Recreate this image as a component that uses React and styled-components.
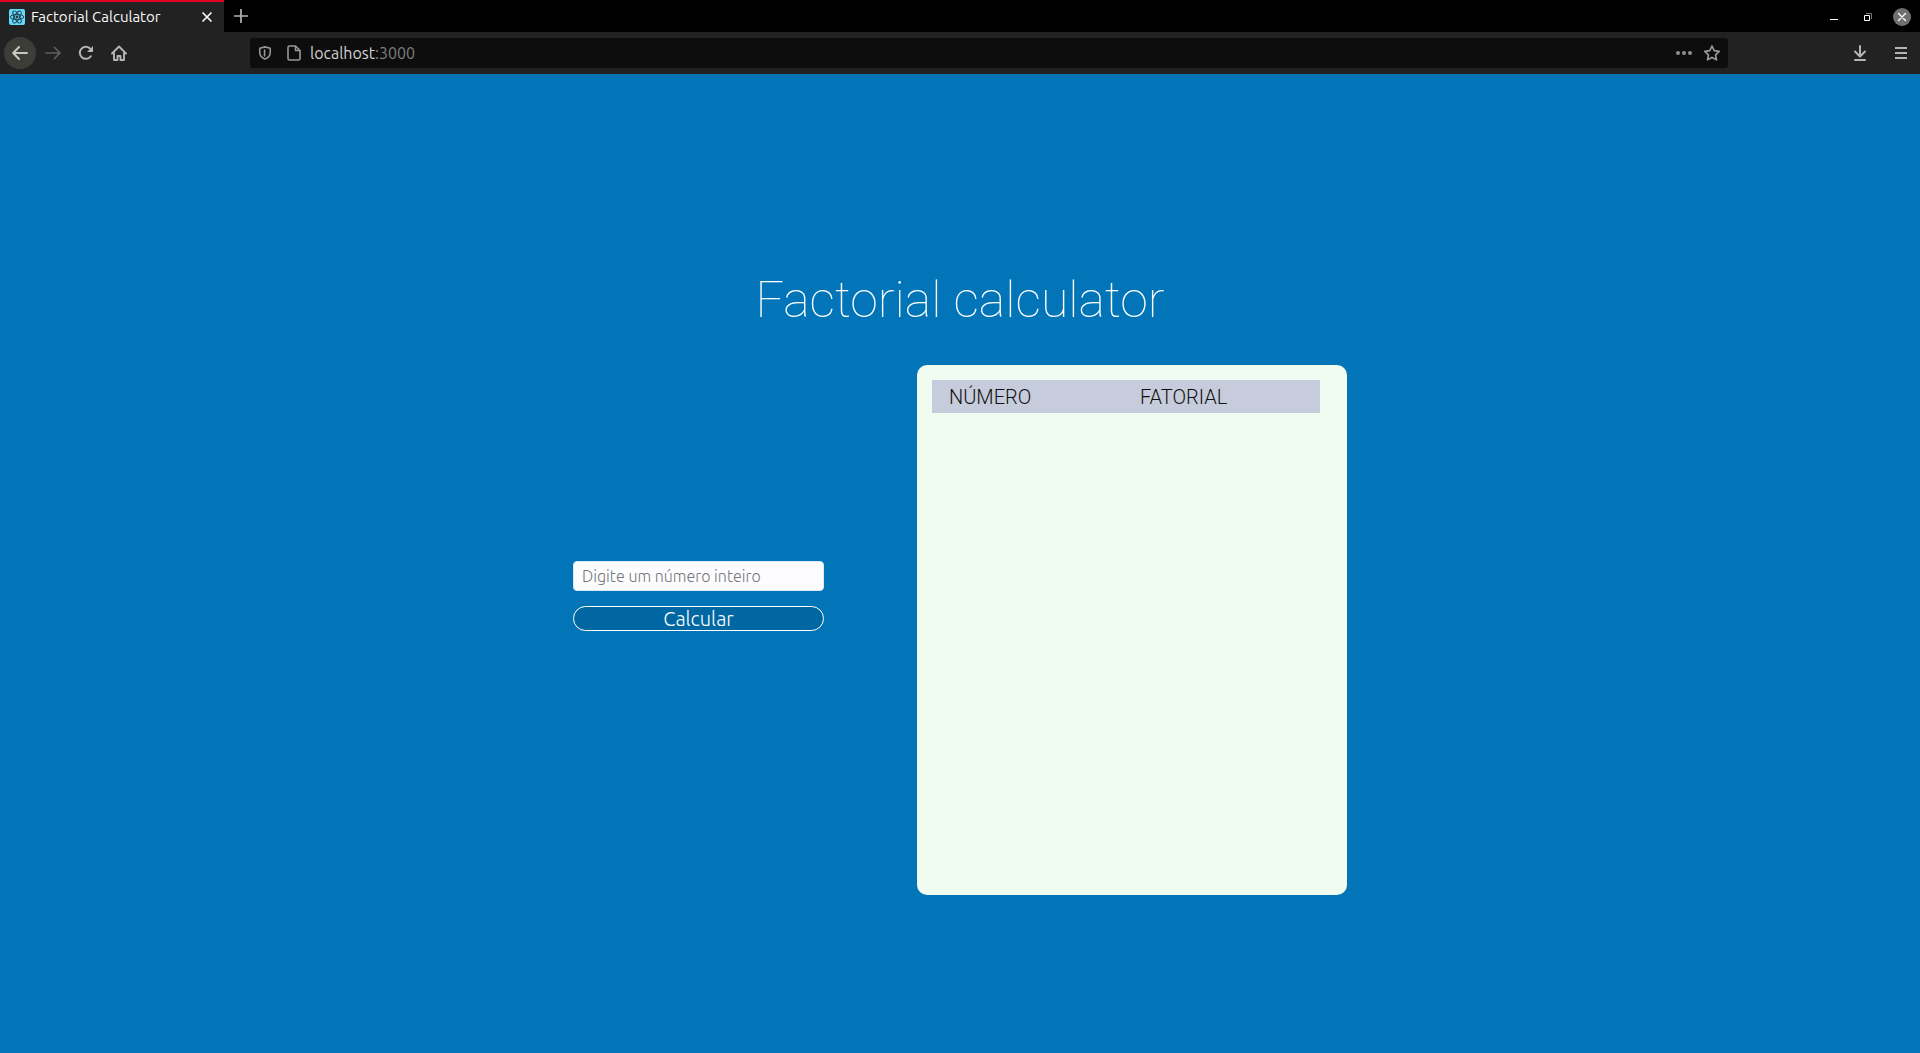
import React, { useState } from 'react';
import styled, { createGlobalStyle } from 'styled-components';

const UI_FONT = 'Ubuntu, "Open Sans", "Noto Sans", sans-serif';
const PAGE_FONT = 'Roboto, "Liberation Sans", sans-serif';

const GlobalStyle = createGlobalStyle`
  *, *::before, *::after { box-sizing: border-box; }
  body { margin: 0; background: #0175b8; }
`;

const Window = styled.div`
  min-height: 100vh;
  display: flex;
  flex-direction: column;
  font-family: ${UI_FONT};
`;

const TabBar = styled.header`
  display: flex;
  gap: 1px;
  height: 32px;
  background: #000;
`;

const Tab = styled.div`
  display: flex;
  align-items: center;
  gap: 6px;
  width: 224px;
  padding: 0 8px 0 9px;
  border-top: 2px solid #e00024;
  background: #222222;
  color: #f9f9fa;
`;

const TabTitle = styled.span`
  flex: 1;
  font-size: 15px;
  line-height: 18px;
  white-space: nowrap;
`;

const IconButton = styled.button`
  display: flex;
  align-items: center;
  justify-content: center;
  flex: none;
  width: ${(p) => p.$size || 32}px;
  height: ${(p) => p.$size || 32}px;
  padding: 0;
  border: 0;
  border-radius: 50%;
  background: ${(p) => p.$fill || 'transparent'};
  color: ${(p) => p.$color || '#b4b4b4'};
`;

const WindowControls = styled.div`
  display: flex;
  align-items: center;
  gap: 16px;
  margin-left: auto;
  padding: 2px 9px 0 0;
`;

const Toolbar = styled.nav`
  display: grid;
  grid-template-columns: 250px 1fr 192px;
  align-items: center;
  height: 42px;
  background: #222222;
`;

const ToolGroup = styled.div`
  display: flex;
  align-items: center;
  gap: 1px;
  padding: 0 4px;
`;

const EndTools = styled(ToolGroup)`
  justify-content: flex-end;
  gap: 9px;
  padding: 0 3px;
`;

const AddressBar = styled.div`
  display: flex;
  align-items: center;
  height: 30px;
  padding: 0 2px 0 7px;
  border-radius: 3px;
  background: #0d0d0d;
`;

const SiteInfo = styled.div`
  display: flex;
  align-items: center;
  gap: 13px;
`;

const Address = styled.span`
  flex: 1;
  padding-left: 8px;
  font-size: 16px;
  line-height: 20px;
  color: #808080;
`;

const Host = styled.span`
  color: #d0d0d0;
`;

const Page = styled.main`
  flex: 1;
  display: flex;
  flex-direction: column;
  align-items: center;
  justify-content: center;
  gap: 35px;
  padding-top: 38px;
  background: #0175b8;
  font-family: ${PAGE_FONT};
`;

const Title = styled.h1`
  margin: 0;
  color: #fff;
  font-size: 50px;
  line-height: 60px;
  font-weight: 100;
`;

const Content = styled.div`
  display: flex;
  align-items: center;
  gap: 93px;
`;

const Form = styled.form`
  display: flex;
  flex-direction: column;
  gap: 15px;
  width: 251px;
  padding-bottom: 68px;
`;

const NumberInput = styled.input`
  width: 100%;
  height: 30px;
  padding: 0 8px;
  border: 1px solid #d8e8f4;
  border-radius: 4px;
  background: #fdfdff;
  color: #333;
  font-family: ${UI_FONT};
  font-size: 16px;
  font-weight: 300;
  &::placeholder { color: #777; opacity: 1; }
`;

const SubmitButton = styled.button`
  display: flex;
  align-items: center;
  justify-content: center;
  height: 25px;
  padding: 0;
  border: 1px solid #fff;
  border-radius: 13px;
  background: #0067a3;
  color: #fff;
  font-family: ${UI_FONT};
  font-size: 20px;
  line-height: 23px;
  font-weight: 300;
`;

const Card = styled.section`
  width: 430px;
  height: 530px;
  padding: 15px 27px 15px 15px;
  border-radius: 10px;
  background: #f0fcf0;
  overflow-y: auto;
`;

const Table = styled.table`
  width: 100%;
  border-collapse: collapse;
  table-layout: fixed;
`;

const HeadCell = styled.th`
  width: ${(p) => p.$width || 'auto'};
  height: 33px;
  padding: 1px 0 0 17px;
  background: #c6ccdb;
  color: #111;
  font-size: 20px;
  line-height: 24px;
  font-weight: 300;
  text-align: left;
`;

const Cell = styled.td`
  padding: 4px 0 4px 17px;
  font-size: 18px;
  font-weight: 300;
  overflow-wrap: anywhere;
`;

function Icon({ children, size = 16, width = 2, cap = 'round' }) {
  return (
    <svg width={size} height={size} viewBox="0 0 16 16" fill="none" stroke="currentColor"
      strokeWidth={width} strokeLinecap={cap} strokeLinejoin="round" aria-hidden="true">
      {children}
    </svg>
  );
}

function ReactLogo() {
  return (
    <svg width="16" height="16" viewBox="0 0 16 16" aria-hidden="true">
      <rect width="16" height="16" rx="2" fill="#61dafb" />
      <g fill="none" stroke="#203a48" strokeWidth="0.9">
        <ellipse cx="8" cy="8" rx="6.8" ry="2.6" />
        <ellipse cx="8" cy="8" rx="6.8" ry="2.6" transform="rotate(60 8 8)" />
        <ellipse cx="8" cy="8" rx="6.8" ry="2.6" transform="rotate(120 8 8)" />
      </g>
      <circle cx="8" cy="8" r="1.4" fill="#203a48" />
    </svg>
  );
}

function factorial(n) {
  let result = 1n;
  for (let i = 2n; i <= BigInt(n); i += 1n) result *= i;
  return result.toString();
}

export default function App() {
  const [value, setValue] = useState('');
  const [rows, setRows] = useState([]);

  const calculate = (event) => {
    event.preventDefault();
    if (!/^\d{1,3}$/.test(value)) return;
    setRows([...rows, { number: value, result: factorial(value) }]);
    setValue('');
  };

  return (
    <Window>
      <GlobalStyle />
      <TabBar>
        <Tab>
          <ReactLogo />
          <TabTitle>Factorial Calculator</TabTitle>
          <IconButton $size={18} $color="#f9f9fa" aria-label="Close tab">
            <Icon width={1.7}><path d="M4 4l8 8M12 4l-8 8" /></Icon>
          </IconButton>
        </Tab>
        <IconButton aria-label="New tab">
          <Icon width={1.7} cap="butt"><path d="M8 1v14M1 8h14" /></Icon>
        </IconButton>
        <WindowControls>
          <IconButton $size={18} $color="#fff" aria-label="Minimize">
            <Icon width={1} cap="butt"><path d="M4 10.5h8" /></Icon>
          </IconButton>
          <IconButton $size={18} $color="#fff" aria-label="Restore">
            <Icon width={1} cap="butt">
              <path d="M6 4.5h5.5V10" stroke="#777" />
              <path d="M4.5 6.5h5v5h-5z" strokeLinejoin="miter" />
            </Icon>
          </IconButton>
          <IconButton $size={18} $color="#fff" $fill="#707070" aria-label="Close window">
            <Icon width={1.3}><path d="M4.5 4.5l7 7M11.5 4.5l-7 7" /></Icon>
          </IconButton>
        </WindowControls>
      </TabBar>
      <Toolbar>
        <ToolGroup>
          <IconButton $fill="#3d3d38" $color="#c8c8c0" aria-label="Back">
            <Icon><path d="M15 8H1.500M7 2L1.200 8L7 14" /></Icon>
          </IconButton>
          <IconButton $color="#606060" aria-label="Forward">
            <Icon width={1.7}><path d="M1 8h13.500M9.500 2.500L15 8l-5.500 5.500" /></Icon>
          </IconButton>
          <IconButton aria-label="Reload">
            <Icon>
              <path d="M12.800 11.200A6 6 0 1 1 12 3.500" />
              <path d="M15 1v6H9z" fill="currentColor" stroke="none" />
            </Icon>
          </IconButton>
          <IconButton aria-label="Home">
            <Icon width={1.9}><path d="M1 8.500L8 1.500l7 7M3 8v7h3.500v-4h3v4H13V8" /></Icon>
          </IconButton>
        </ToolGroup>
        <AddressBar>
          <SiteInfo>
            <IconButton $size={16} $color="#989898" aria-label="Tracking protection">
              <Icon size={14} width={1.8}>
                <path d="M8 1l6 1.500V7c0 4-2.500 6.500-6 8-3.500-1.500-6-4-6-8V2.500z" />
                <path d="M7.500 4.500v7" />
              </Icon>
            </IconButton>
            <IconButton $size={16} $color="#989898" aria-label="Page information">
              <Icon width={1.6}>
                <path d="M9.500 1H3.500Q2 1 2 2.500v11Q2 15 3.500 15h9q1.500 0 1.500-1.500V5.500zv4.500H14" />
              </Icon>
            </IconButton>
          </SiteInfo>
          <Address><Host>localhost</Host>:3000</Address>
          <IconButton $size={28} $color="#8e8e8e" aria-label="Page actions">
            <Icon>
              <g fill="currentColor" stroke="none">
                <circle cx="2" cy="8" r="2" />
                <circle cx="8" cy="8" r="2" />
                <circle cx="14" cy="8" r="2" />
              </g>
            </Icon>
          </IconButton>
          <IconButton $size={28} $color="#989898" aria-label="Bookmark this page">
            <Icon width={1.7}>
              <path d="M8 1l2.200 4.600 5 .7-3.600 3.500.9 5L8 12.400l-4.500 2.400.9-5L.8 6.300l5-.7z" />
            </Icon>
          </IconButton>
        </AddressBar>
        <EndTools>
          <IconButton aria-label="Downloads">
            <Icon><path d="M8 1v9.500M3 6.500l5 5 5-5M3 15h10" /></Icon>
          </IconButton>
          <IconButton aria-label="Menu">
            <Icon cap="butt"><path d="M2 3h12M2 8h12M2 13h12" /></Icon>
          </IconButton>
        </EndTools>
      </Toolbar>
      <Page>
        <Title>Factorial calculator</Title>
        <Content>
          <Form onSubmit={calculate}>
            <NumberInput aria-label="Digite um número inteiro" placeholder="Digite um número inteiro"
              inputMode="numeric" value={value} onChange={(e) => setValue(e.target.value)} />
            <SubmitButton type="submit">Calcular</SubmitButton>
          </Form>
          <Card>
            <Table>
              <thead>
                <tr>
                  <HeadCell $width="191px">NÚMERO</HeadCell>
                  <HeadCell>FATORIAL</HeadCell>
                </tr>
              </thead>
              <tbody>
                {rows.map((row, index) => (
                  <tr key={index}>
                    <Cell>{row.number}</Cell>
                    <Cell>{row.result}</Cell>
                  </tr>
                ))}
              </tbody>
            </Table>
          </Card>
        </Content>
      </Page>
    </Window>
  );
}
